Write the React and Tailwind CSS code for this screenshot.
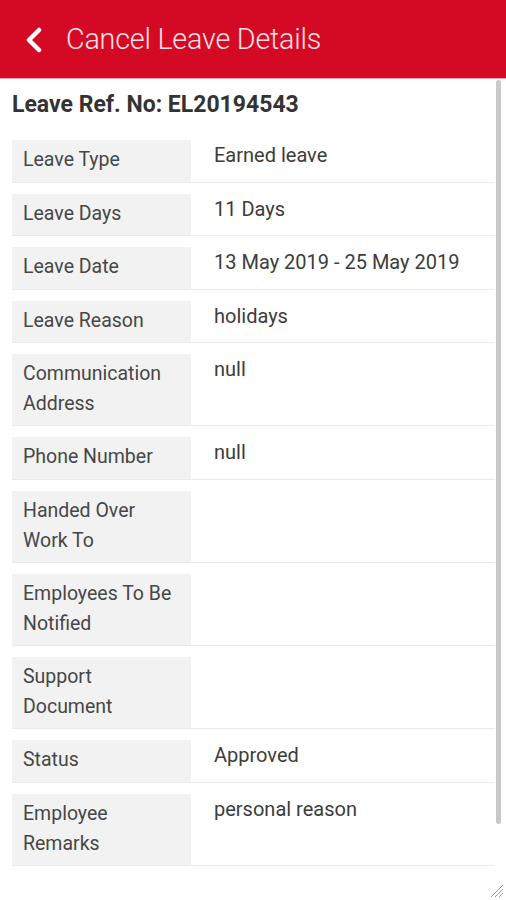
import React from "react";

const rows = [
  { label: "Leave Type", value: "Earned leave" },
  { label: "Leave Days", value: "11 Days" },
  { label: "Leave Date", value: "13 May 2019 - 25 May 2019" },
  { label: "Leave Reason", value: "holidays" },
  { label: ["Communication", "Address"], value: "null" },
  { label: "Phone Number", value: "null" },
  { label: ["Handed Over", "Work To"], value: "" },
  { label: ["Employees To Be", "Notified"], value: "" },
  { label: ["Support", "Document"], value: "" },
  { label: "Status", value: "Approved" },
  { label: ["Employee", "Remarks"], value: "personal reason" },
];

function Row({ label, value }) {
  const lines = Array.isArray(label) ? label : [label];
  const dbl = lines.length > 1;
  return (
    <div className={`flex items-start mt-[11px] border-b border-[#e9e9e9] ${dbl ? "h-[72px]" : "h-[42.6px]"}`}>
      <div
        className={`w-[179px] shrink-0 bg-[#f2f2f2] pl-[11px] pt-[5px] text-[19.5px] leading-[30px] text-[#474747] ${dbl ? "h-[71px]" : "h-[41.6px]"}`}
      >
        {lines.map((l, i) => (
          <div key={i}>{l}</div>
        ))}
      </div>
      <div className="pl-[23px] pt-[1px] text-[20px] leading-[28px] text-[#3c3c3c]">{value}</div>
    </div>
  );
}

export default function App() {
  return (
    <div
      className="relative w-full h-[900px] overflow-hidden bg-white"
      style={{ fontFamily: "Roboto, 'Liberation Sans', sans-serif" }}
    >
      <div className="h-[79px] bg-[#d40a25] flex items-center border-b border-[#e9a2ab] pt-[2px]">
        <svg width="20" height="26" viewBox="0 0 20 26" className="ml-[24px]">
          <polyline
            points="15,3 5,13 15,23"
            fill="none"
            stroke="white"
            strokeWidth="4.5"
            strokeLinecap="round"
            strokeLinejoin="round"
          />
        </svg>
        <div className="ml-[22px] text-[28.7px] font-light text-[#fde0e4] tracking-[-0.2px]">
          Cancel Leave Details
        </div>
      </div>
      <div className="pl-[12px] pr-[11px]">
        <div className="pt-[11px] text-[23px] font-bold leading-[30px] text-[#333333]">
          Leave Ref. No: EL20194543
        </div>
        <div className="pt-[9px]">
          {rows.map((r, i) => (
            <Row key={i} label={r.label} value={r.value} />
          ))}
        </div>
      </div>
      <div className="absolute left-[496px] top-[80px] w-[5px] h-[744px] rounded-full bg-[#c9c9c9]" />
      <svg className="absolute right-[2px] bottom-[2px]" width="16" height="16" viewBox="0 0 16 16">
        <line x1="15" y1="3" x2="3" y2="15" stroke="#9a9a9a" strokeWidth="1" />
        <line x1="15" y1="7" x2="7" y2="15" stroke="#9a9a9a" strokeWidth="1" />
        <line x1="15" y1="11" x2="11" y2="15" stroke="#9a9a9a" strokeWidth="1" />
      </svg>
    </div>
  );
}
